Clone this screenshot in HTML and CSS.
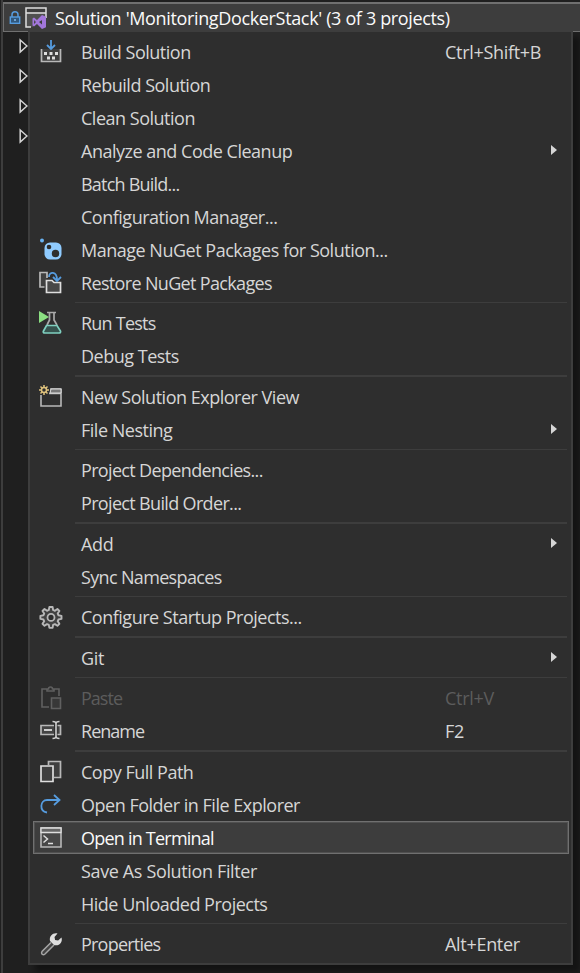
FILE: index.html
```
<!DOCTYPE html>
<html lang="en">
<head>
<meta charset="utf-8">
<title>Solution Explorer</title>
<link rel="stylesheet" href="styles.css">
</head>
<body>
<main class="explorer">
  <header class="solution">
    <svg class="lock" width="12" height="14" viewBox="0 0 12 14"><path d="M3 6V3.8a3 3 0 0 1 6 0V6" fill="none" stroke="#569cdf" stroke-width="1.5"/><rect x="1.3" y="6" width="9.4" height="6.3" fill="#30577c" stroke="#569cdf" stroke-width="1.4"/><path d="M6 8v2" stroke="#8bc4fa" stroke-width="1.4"/></svg>
    <svg class="sln" width="24" height="24" viewBox="0 0 24 24"><path d="M2 6h20v8l-6 1-7 2v4H2z" fill="#505050"/><path d="M7 21H2V2h20v10M2 7h20" fill="none" stroke="#dedede" stroke-width="1.5"/><path fill-rule="evenodd" d="M18 9l4 1.7v10.6L18 23l-5-5-3 2.4-1.5-1v-7L10 11.600l3 2.400zm0 5l-3 2 3 2.400zM10 14v4l2-2z" fill="#a277db"/></svg>
    <h1 class="title">Solution 'MonitoringDockerStack' (3 of 3 projects)</h1>
  </header>
  <div class="tree">
    <svg class="node" viewBox="0 0 9 16"><path d="M1.200 2L8 8l-6.800 6z"/></svg>
    <svg class="node" viewBox="0 0 9 16"><path d="M1.200 2L8 8l-6.800 6z"/></svg>
    <svg class="node" viewBox="0 0 9 16"><path d="M1.200 2L8 8l-6.800 6z"/></svg>
    <svg class="node" viewBox="0 0 9 16"><path d="M1.200 2L8 8l-6.800 6z"/></svg>
  </div>
</main>
<nav class="menu">
  <div class="item"><svg class="icon" viewBox="0 0 24 24"><path d="M2.500 9v12.500h19V9" fill="#3f3f3f" stroke="#b8b8b8" stroke-width="1.700"/><path d="M5 13.500h3M10.500 13.500h3M16 13.500h3M8 18h3M13 18h3" stroke="#dedede" stroke-width="3"/><path d="M12 0v8M8 5l4 4 4-4" fill="none" stroke="#569cdf" stroke-width="1.800"/></svg><span class="label">Build Solution</span><span class="key">Ctrl+Shift+B</span></div>
  <div class="item"><span class="label">Rebuild Solution</span></div>
  <div class="item"><span class="label">Clean Solution</span></div>
  <div class="item"><span class="label">Analyze and Code Cleanup</span><span class="arrow"></span></div>
  <div class="item"><span class="label tight">Batch Build...</span></div>
  <div class="item"><span class="label">Configuration Manager...</span></div>
  <div class="item"><svg class="icon" viewBox="0 0 24 24"><circle cx="3" cy="2.500" r="2" fill="#69b4f4"/><rect x="5.500" y="4.500" width="17" height="17" rx="5.500" fill="#8fcbff"/><circle cx="10" cy="9" r="2.300" fill="#2e2e2e"/><circle cx="16.500" cy="15.500" r="3.700" fill="#2e2e2e"/></svg><span class="label">Manage NuGet Packages for Solution...</span></div>
  <div class="item"><svg class="icon" viewBox="0 0 24 24"><path d="M5.500 16H1V1.500h7V7" fill="#404040" stroke="#b8b8b8" stroke-width="1.700"/><path d="M7.500 21.500V9.500H13l2 2h6.500v10z" fill="#484848" stroke="#dedede" stroke-width="1.700"/><path d="M10 6c0-6 8-6 8 3M14 6l4 4 4-4" fill="none" stroke="#569cdf" stroke-width="1.800"/></svg><span class="label snug">Restore NuGet Packages</span></div>
  <hr class="rule">
  <div class="item"><svg class="icon" viewBox="0 0 24 24"><path d="M8 1.500h9M10.500 2v7L8 14M15 2v7l3 5" fill="none" stroke="#aaa" stroke-width="1.700"/><path d="M7.500 14.500h10.500l3.500 5.500q.5 2-1.500 2H6q-2.500 0-1.500-2z" fill="#36534e" stroke="#7fd0c0" stroke-width="1.700"/><path d="M0 0l10 6-10 6z" fill="#8be082"/></svg><span class="label tight">Run Tests</span></div>
  <div class="item"><span class="label">Debug Tests</span></div>
  <hr class="rule rule-thick">
  <div class="item"><svg class="icon" viewBox="0 0 24 24"><path d="M2 10v11h20V4H11M10 8.500h12" fill="none" stroke="#b8b8b8" stroke-width="1.600"/><path d="M12 4h10v4H11z" fill="#777" stroke="#dedede"/><g fill="none" stroke="#dfc27d" stroke-width="1.500"><circle cx="5" cy="5" r="2.500"/><path d="M5 0v2.500M5 7.500V10M0 5h2.500M7.500 5H10M1.500 1.500l1.700 1.700M6.800 6.800l1.700 1.700M8.500 1.500L6.800 3.200M3.200 6.800L1.500 8.500"/></g></svg><span class="label">New Solution Explorer View</span></div>
  <div class="item"><span class="label">File Nesting</span><span class="arrow"></span></div>
  <hr class="rule">
  <div class="item"><span class="label snug">Project Dependencies...</span></div>
  <div class="item"><span class="label snug">Project Build Order...</span></div>
  <hr class="rule rule-thick">
  <div class="item"><span class="label loose">Add</span><span class="arrow"></span></div>
  <div class="item"><span class="label snug">Sync Namespaces</span></div>
  <hr class="rule">
  <div class="item"><svg class="icon" viewBox="0 0 24 24"><path d="M10.400 2h3.200l.5 3 1.800.8 2.500-1.800 2 2-1.700 2.500.8 1.800 3 .6v3l-3 .6-.8 1.800 1.700 2.500-2 2-2.500-1.700-1.800.8-.5 3h-3.200l-.6-3-1.800-.8-2.500 1.700-2-2 1.700-2.500-.8-1.800-3-.6v-3l3-.6.8-1.800L3.500 6l2-2L8 5.800 9.800 5z" fill="#424242" stroke="#b8b8b8" stroke-width="1.900" stroke-linejoin="round"/><circle cx="12" cy="12.400" r="3.500" fill="#2e2e2e" stroke="#b8b8b8" stroke-width="1.800"/></svg><span class="label">Configure Startup Projects...</span></div>
  <hr class="rule rule-thick">
  <div class="item"><span class="label loose">Git</span><span class="arrow"></span></div>
  <hr class="rule">
  <div class="item disabled"><svg class="icon" viewBox="0 0 24 24"><g fill="none" stroke="#606060" stroke-width="1.600"><path d="M8 3H3v18h7M15 3h5v7M8 5h7V3h-1.500a2 2 0 0 0-4 0H8z"/><path d="M12.500 12h9v10.500h-9z" fill="#383838"/></g></svg><span class="label tighter">Paste</span><span class="key">Ctrl+V</span></div>
  <div class="item"><svg class="icon" viewBox="0 0 24 24"><path d="M15 6.500H2v9h13M18.500 6.500h3v9h-3" fill="#444" stroke="#b8b8b8" stroke-width="1.700"/><path d="M5 11h8" stroke="#dedede" stroke-width="1.800"/><path d="M13.500 2.500q3.500 0 3.500 2v13q0 2-3.500 2M20.500 2.500q-3.500 0-3.500 2v13q0 2 3.500 2" fill="none" stroke="#d0d0d0" stroke-width="1.600"/></svg><span class="label tighter">Rename</span><span class="key">F2</span></div>
  <hr class="rule rule-thick">
  <div class="item"><svg class="icon" viewBox="0 0 24 24"><path d="M9.500 5V1.500h12v16H15" fill="#3f3f3f" stroke="#b8b8b8" stroke-width="1.700"/><path d="M2 6h12v15.500H2z" fill="#3f3f3f" stroke="#dedede" stroke-width="1.700"/></svg><span class="label">Copy Full Path</span></div>
  <div class="item"><svg class="icon" viewBox="0 0 24 24"><path d="M8 19.500C0 18 1 7 8 7h12.500M15 2l5.500 5-5.500 5" fill="none" stroke="#569cdf" stroke-width="1.800"/></svg><span class="label">Open Folder in File Explorer</span></div>
  <div class="item active"><svg class="icon" viewBox="0 0 24 24"><path d="M2 2h20v19H2z" fill="#484848" stroke="#b8b8b8" stroke-width="1.600"/><path d="M2 2h20v4.500H2z" fill="#666" stroke="#dedede" stroke-width="1.300"/><path d="M4.500 9.500l4 3.500-4 3.500M9 17.500h5" fill="none" stroke="#dedede" stroke-width="1.500"/></svg><span class="label tight">Open in Terminal</span></div>
  <div class="item"><span class="label loose">Save As Solution Filter</span></div>
  <div class="item"><span class="label">Hide Unloaded Projects</span></div>
  <hr class="rule">
  <div class="item"><svg class="icon" viewBox="0 0 24 24"><path d="M12 10.500l-9 9q-1 2 .5 3 1 .8 2.500-.5l9-9" fill="#444" stroke="#a5a5a5" stroke-width="1.500"/><path d="M18.500 1.500L15.500 5l.6 3 3 .6 3.400-3.100c1.500 5-2.500 9-7.500 7.500l-4-4c-1-5 3-8.500 7.500-7.500z" fill="#dedede"/></svg><span class="label tight">Properties</span><span class="key">Alt+Enter</span></div>
</nav>
</body>
</html>
```
FILE: styles.css
```
* { box-sizing: border-box; }
body {
  margin: 0;
  width: 580px;
  height: 973px;
  overflow: hidden;
  position: relative;
  background: #1f1f1f;
  color: #d6d6d6;
  font: 18px/24px "Open Sans", "Noto Sans", sans-serif;
  letter-spacing: -0.49px;
}
.explorer {
  height: 973px;
  margin-left: 1px;
  padding-top: 2px;
  border-left: 2px solid #3d3d3d;
}
.solution {
  display: flex;
  align-items: center;
  height: 30px;
  border: 1px solid #707070;
  border-width: 2px 0 1px 1px;
  background: #3d3d3d;
}
.lock { margin-left: 5px; flex: none; }
.sln { margin-left: 3px; flex: none; }
.title {
  margin: 0 0 0 7px;
  font: inherit;
  letter-spacing: -0.35px;
  color: #fafafa;
  white-space: nowrap;
}
.tree {
  display: flex;
  flex-direction: column;
  gap: 14px;
  padding: 6px 0 0 16px;
}
.node { width: 9px; height: 16px; fill: none; stroke: #d6d6d6; stroke-width: 1.5; }
.menu {
  position: absolute;
  left: 28px;
  top: 30px;
  width: 545px;
  height: 935px;
  padding: 3px 2px 0 3px;
  border: 2px solid #3d3d3d;
  background: #2e2e2e;
  box-shadow: 7px 7px 6px rgba(0, 0, 0, 0.4);
}
.item {
  display: grid;
  grid-template-columns: 48px 364px 1fr;
  align-items: center;
  height: 33px;
}
.icon { grid-column: 1; width: 24px; height: 24px; margin: 0 0 0 5.6px; }
.label { grid-column: 2; grid-row: 1; white-space: nowrap; }
.key { grid-column: 3; grid-row: 1; white-space: nowrap; letter-spacing: -0.3px; }
.loose { letter-spacing: -0.36px; }
.snug { letter-spacing: -0.66px; }
.tight { letter-spacing: -0.78px; }
.tighter { letter-spacing: -0.98px; }
.arrow {
  grid-column: 3;
  width: 0;
  height: 0;
  margin: -2px 0 0 106px;
  border: solid transparent;
  border-width: 5px 0 5px 6px;
  border-left-color: #d6d6d6;
}
.rule {
  height: 1px;
  margin: 3px 2px 3px 42px;
  border: 0;
  background: #3d3d3d;
}
.rule-thick { height: 2px; }
.disabled { color: #5c5c5c; }
.active {
  color: #fafafa;
  background: #3d3d3d;
  box-shadow: inset 0 0 0 1px #707070, inset 0 0 0 2px #505050;
}
```
